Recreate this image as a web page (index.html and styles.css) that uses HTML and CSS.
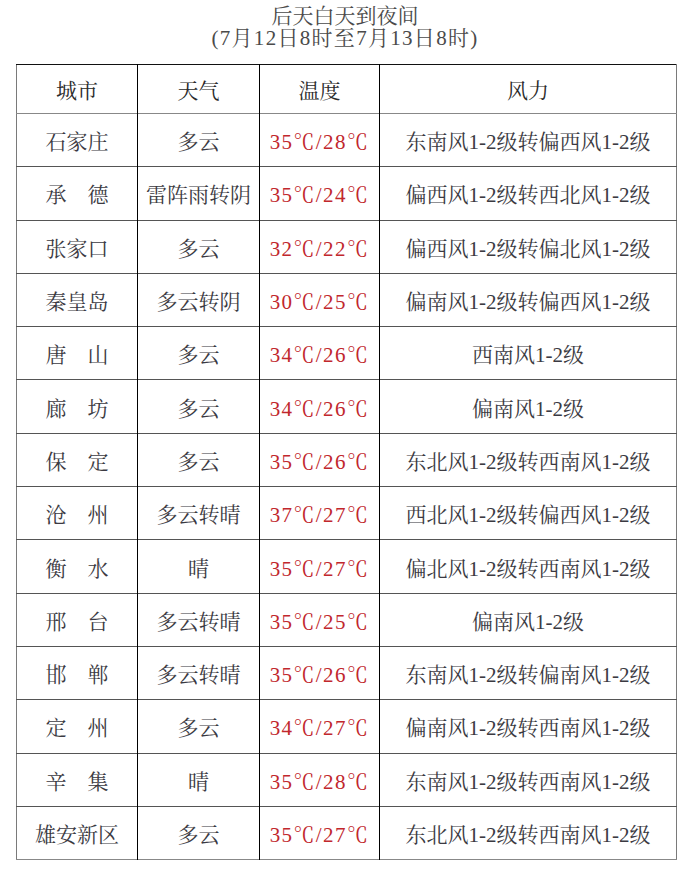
FILE: index.html
```html
<!DOCTYPE html>
<html lang="zh">
<head>
<meta charset="utf-8">
<title>后天白天到夜间</title>
<link rel="stylesheet" href="styles.css">
</head>
<body>
<div class="title">
  <div class="title-line">后天白天到夜间</div>
  <div class="title-line sub">(7月12日8时至7月13日8时)</div>
</div>
<table class="forecast">
  <colgroup>
    <col class="c-city"><col class="c-weather"><col class="c-temp"><col class="c-wind">
  </colgroup>
  <thead>
    <tr class="head"><th>城市</th><th>天气</th><th>温度</th><th>风力</th></tr>
  </thead>
  <tbody>
    <tr><td>石家庄</td><td>多云</td><td class="temp">35℃/28℃</td><td>东南风1-2级转偏西风1-2级</td></tr>
    <tr><td>承　德</td><td>雷阵雨转阴</td><td class="temp">35℃/24℃</td><td>偏西风1-2级转西北风1-2级</td></tr>
    <tr><td>张家口</td><td>多云</td><td class="temp">32℃/22℃</td><td>偏西风1-2级转偏北风1-2级</td></tr>
    <tr><td>秦皇岛</td><td>多云转阴</td><td class="temp">30℃/25℃</td><td>偏南风1-2级转偏西风1-2级</td></tr>
    <tr><td>唐　山</td><td>多云</td><td class="temp">34℃/26℃</td><td>西南风1-2级</td></tr>
    <tr><td>廊　坊</td><td>多云</td><td class="temp">34℃/26℃</td><td>偏南风1-2级</td></tr>
    <tr><td>保　定</td><td>多云</td><td class="temp">35℃/26℃</td><td>东北风1-2级转西南风1-2级</td></tr>
    <tr><td>沧　州</td><td>多云转晴</td><td class="temp">37℃/27℃</td><td>西北风1-2级转偏西风1-2级</td></tr>
    <tr><td>衡　水</td><td>晴</td><td class="temp">35℃/27℃</td><td>偏北风1-2级转西南风1-2级</td></tr>
    <tr><td>邢　台</td><td>多云转晴</td><td class="temp">35℃/25℃</td><td>偏南风1-2级</td></tr>
    <tr><td>邯　郸</td><td>多云转晴</td><td class="temp">35℃/26℃</td><td>东南风1-2级转偏南风1-2级</td></tr>
    <tr><td>定　州</td><td>多云</td><td class="temp">34℃/27℃</td><td>偏南风1-2级转西南风1-2级</td></tr>
    <tr><td>辛　集</td><td>晴</td><td class="temp">35℃/28℃</td><td>东南风1-2级转西南风1-2级</td></tr>
    <tr><td>雄安新区</td><td>多云</td><td class="temp">35℃/27℃</td><td>东北风1-2级转西南风1-2级</td></tr>
  </tbody>
</table>
</body>
</html>
```

FILE: styles.css
```css
html, body {
  margin: 0;
  padding: 0;
  background: #ffffff;
}

body {
  font-family: "Liberation Serif", "Noto Serif CJK SC", "Noto Sans CJK SC", serif;
  color: #3b3a42;
}

.title {
  padding-top: 5px;
  text-align: center;
  color: #4a4a4a;
  font-size: 21px;
  line-height: 22px;
}

.title .sub {
  letter-spacing: 1.3px;
}

.forecast {
  margin: 15px 0 0 16px;
  width: 660px;
  border-collapse: collapse;
  table-layout: fixed;
  border-left: 1px solid #7a7a7a;
  border-right: 1px solid #7a7a7a;
  border-top: 1px solid #111;
  border-bottom: 1px solid #888;
}

.c-city { width: 121px; }
.c-weather { width: 122px; }
.c-temp { width: 120px; }
.c-wind { width: 297px; }

.forecast th,
.forecast td {
  padding: 0;
  text-align: center;
  vertical-align: middle;
  font-size: 21px;
  font-weight: normal;
  white-space: nowrap;
  border-left: 1px solid #000;
  border-top: 1px solid #555;
}

.forecast th:first-child,
.forecast td:first-child {
  border-left: none;
}

.forecast .head th {
  height: 48px;
  color: #2a2a2a;
  border-top: none;
}

.forecast tbody td {
  height: 52.3px;
}

.forecast tbody tr:first-child td {
  border-top: 1px solid #888;
}

.forecast .temp {
  color: #c1272d;
  letter-spacing: 1.4px;
}
```
